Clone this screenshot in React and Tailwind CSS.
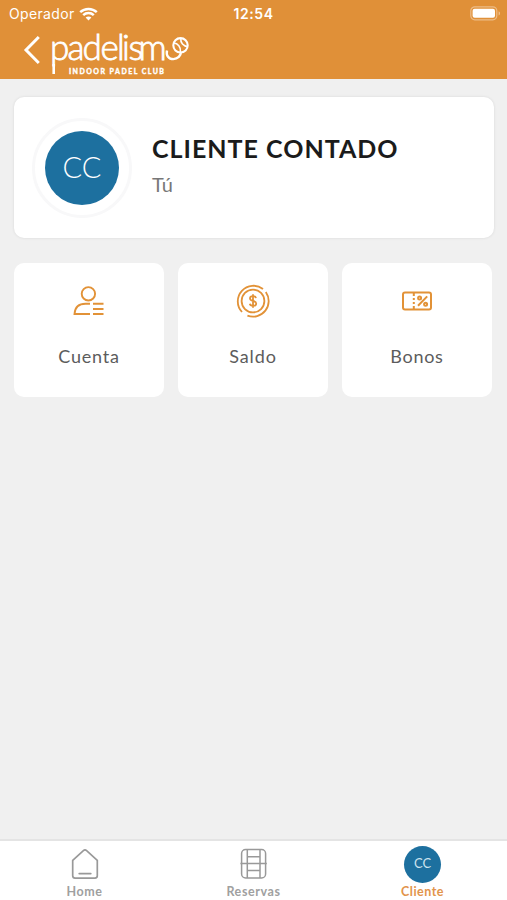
const WifiIcon = () => (
  <svg width="19" height="14" viewBox="0 0 19 14" fill="none" stroke="#fff" strokeWidth="2.5">
    <path d="M1.2 5.1C5.8 .8 13.2 .8 17.8 5.1" />
    <path d="M4.2 8.2c3-2.8 7.6-2.8 10.6 0" />
    <path d="M6.6 10.6c1.6-1.6 4.2-1.6 5.8 0L9.5 13.5z" fill="#fff" stroke="none" />
  </svg>
)

const BatteryIcon = () => (
  <svg width="31" height="15" viewBox="0 0 31 15" fill="none">
    <rect x=".8" y=".8" width="26" height="13" rx="4" stroke="#fff" strokeOpacity=".4" strokeWidth="1.2" />
    <rect x="2.6" y="2.8" width="22.4" height="9" rx="2" fill="#fff" />
    <path d="M28.7 5.2c1.6.7 1.6 3.6 0 4.2z" fill="#fff" fillOpacity=".5" />
  </svg>
)

const BackIcon = () => (
  <svg width="18" height="30" viewBox="0 0 18 30" fill="none" stroke="#fff" strokeWidth="3">
    <path d="M15.8 2 3 15l12.8 13" />
  </svg>
)

const Logo = () => (
  <svg width="144" height="50" viewBox="0 0 144 50" fill="none" stroke="#fff" className="overflow-visible">
    <text x="1 18.5 33.5 51.5 68 73 79.5 89.5" y="31.5" fill="#fff" strokeWidth=".8" className="font-['Lato'] text-[35px] font-light">
      padelism
    </text>
    {/* long stem of the p */}
    <path d="M4.7 36v10" strokeWidth="2.6" />
    {/* open last letter with the ball resting on it */}
    <path d="M118 22.5c-1.2 5 1.8 8.6 6.3 8.6s7.6-3.3 7.6-7.2" strokeWidth="2.4" />
    <circle cx="131.5" cy="17.3" r="7.2" strokeWidth="2.1" />
    <path d="M124.8 15c4 .2 7.3 4 6.6 9M131.8 10.5c-.5 4.2 2.7 8 6.8 8" strokeWidth="1.6" />
    <text x="20" y="46" fill="#fff" strokeWidth=".3" textLength="95" className="font-['Lato'] text-[7px] font-black">
      INDOOR PADEL CLUB
    </text>
  </svg>
)

const AccountIcon = () => (
  <svg width="32" height="32" viewBox="0 0 32 32" fill="none" stroke="#e29237" strokeWidth="1.9">
    <circle cx="15.4" cy="8.8" r="6.7" />
    <path d="M17 18.8h-4.5C5.8 18.8 2 22 1.5 29H17M20 18.8h10.5M20 24h10.5M20 29h10.5" />
  </svg>
)

const BalanceIcon = () => (
  <svg width="34" height="34" viewBox="0 0 34 34" fill="none" stroke="#e29237" strokeWidth="1.8">
    <circle cx="17" cy="17" r="11.4" />
    <path d="M6 28A15.6 15.6 0 0 1 27 5.05M29.8 8.05A15.6 15.6 0 0 1 11.4 31.6" />
    <path d="M20 14.1c-.3-1.3-1.5-1.9-3-1.9-1.8 0-3 .8-3 2.2 0 3.4 6.2 1.6 6.2 5 0 1.6-1.3 2.4-3.2 2.4-1.7 0-2.9-.8-3.2-2.1M17 10.2v13.6" />
  </svg>
)

const VoucherIcon = () => (
  <svg width="30" height="20" viewBox="0 0 30 20" fill="none" stroke="#e29237" strokeWidth="2">
    <rect x="1" y="1.4" width="28" height="17" rx="2" />
    <path d="M11.8 2v3M11.8 7v2M11.8 11v2M11.8 15v3M16 14.8l9.2-9.4" />
    <circle cx="17.6" cy="6.9" r="1.5" />
    <circle cx="23.6" cy="13.2" r="1.5" />
  </svg>
)

const HomeIcon = () => (
  <svg width="28" height="32" viewBox="0 0 28 32" fill="none" stroke="#999" strokeWidth="1.7" strokeLinejoin="round" strokeLinecap="round">
    <path d="M1.7 12.3 12.4 2.6q1.6-1.4 3.2 0l10.7 9.7v15.5q0 2.3-2.3 2.3H4q-2.3 0-2.3-2.3z" />
    <path d="M8.2 25.6h11.6" />
  </svg>
)

const CourtIcon = () => (
  <svg width="28" height="32" viewBox="0 0 28 32" fill="none" stroke="#999" strokeWidth="1.5">
    <rect x="1.6" y="1.6" width="24" height="28.4" rx="4" />
    <path d="M7.3 2v28M20 2v28M7.3 8.8h12.7M.4 15.6h26.4M7.3 22.6h12.7" />
  </svg>
)

const tiles = [
  { label: 'Cuenta', Icon: AccountIcon, text: 'tracking-[0.8px]' },
  { label: 'Saldo', Icon: BalanceIcon, text: 'tracking-[0.9px]' },
  { label: 'Bonos', Icon: VoucherIcon, text: 'tracking-[0.7px]' },
]

const App = () => {
  return (
    <div className="flex h-[900px] w-[507px] flex-col overflow-hidden bg-[#f0f0f0] font-['Lato',sans-serif]">
      <header className="h-[79px] shrink-0 bg-[#e09038] text-white">
        <div className="grid h-[27px] grid-cols-3 items-center pl-[9px] pr-[6px] font-['Inter',sans-serif] text-[14px]">
          <div className="flex items-center gap-1">
            <span className="tracking-[0.35px]">Operador</span>
            <WifiIcon />
          </div>
          <span className="pr-[3px] text-center font-semibold tracking-[0.6px]">12:54</span>
          <div className="flex justify-end">
            <BatteryIcon />
          </div>
        </div>
        <div className="flex pl-[23px] pt-px">
          <div className="mr-2 pt-[7px]">
            <BackIcon />
          </div>
          <Logo />
        </div>
      </header>

      <main className="flex-1 pl-[14px] pr-[13px] pt-[18px]">
        <section className="flex h-[141px] items-center rounded-[10px] bg-white pl-[18px] shadow-[0_0_3px_rgba(0,0,0,0.1)]">
          <div className="flex size-[100px] items-center justify-center rounded-full border-[3px] border-[#f8f8f9]">
            <div className="flex size-[74px] items-center justify-center rounded-full bg-[#1d709f] pb-0.5 text-[29px] font-light text-white">
              CC
            </div>
          </div>
          <div className="mb-1.5 ml-5">
            <h1 className="text-[25px] font-bold leading-8 tracking-[1px] text-[#1b1b1b]">CLIENTE CONTADO</h1>
            <p className="mt-1.5 text-[20px] leading-7 text-[#777]">Tú</p>
          </div>
        </section>

        <section className="mt-[25px] flex gap-[14px]">
          {tiles.map(({ label, Icon, text }) => (
            <button key={label} className="flex h-[134px] w-[150px] flex-col items-center rounded-[10px] bg-white">
              <span className="flex h-[76px] items-center justify-center pr-px">
                <Icon />
              </span>
              <span className={`text-[18px] leading-[34px] text-[#5c5c5c] ${text}`}>{label}</span>
            </button>
          ))}
        </section>
      </main>

      <nav className="grid h-[61px] shrink-0 grid-cols-3 border-t-2 border-[#e4e4e4] bg-white text-[12.5px] font-bold text-[#a0a0a0]">
        <div className="flex flex-col items-center">
          <span className="flex h-[42px] items-center pt-1">
            <HomeIcon />
          </span>
          <span className="leading-[17px] tracking-[0.6px]">Home</span>
        </div>
        <div className="flex flex-col items-center">
          <span className="flex h-[42px] items-center pt-1">
            <CourtIcon />
          </span>
          <span className="leading-[17px] tracking-[0.6px]">Reservas</span>
        </div>
        <div className="flex flex-col items-center text-[#e2944b]">
          <span className="flex h-[42px] items-center pt-1">
            <span className="flex size-[37px] items-center justify-center rounded-full bg-[#1d709f] text-[13px] font-normal text-[#cde3ee]">CC</span>
          </span>
          <span className="leading-[17px] tracking-[0.5px]">Cliente</span>
        </div>
      </nav>
    </div>
  )
}

export default App
